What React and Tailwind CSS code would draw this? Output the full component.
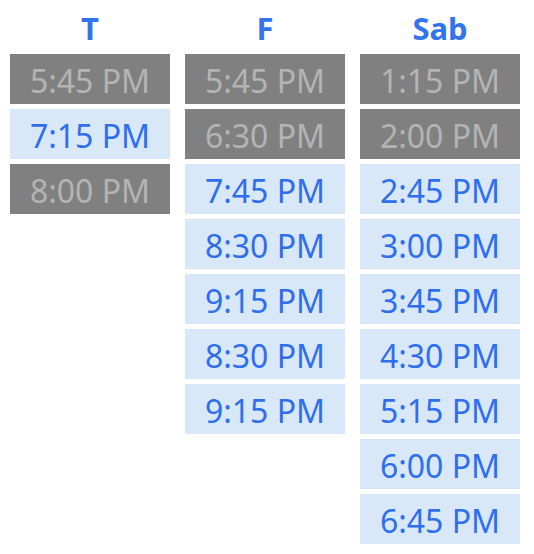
import React from "react";

const cols = [
  { day: "T", slots: [["5:45 PM", 0], ["7:15 PM", 1], ["8:00 PM", 0]] },
  {
    day: "F",
    slots: [["5:45 PM", 0], ["6:30 PM", 0], ["7:45 PM", 1], ["8:30 PM", 1], ["9:15 PM", 1], ["8:30 PM", 1], ["9:15 PM", 1]],
  },
  {
    day: "Sab",
    slots: [["1:15 PM", 0], ["2:00 PM", 0], ["2:45 PM", 1], ["3:00 PM", 1], ["3:45 PM", 1], ["4:30 PM", 1], ["5:15 PM", 1], ["6:00 PM", 1], ["6:45 PM", 1]],
  },
];

export default function App() {
  return (
    <div className="w-[534px] h-[554px] bg-white flex gap-[15px] pl-[10px]" style={{ fontFamily: '"Noto Sans", sans-serif' }}>
      {cols.map((c) => (
        <div key={c.day} className="w-[160px] flex flex-col gap-[5px]">
          <div className="h-[49px] flex items-end justify-center text-[#3274ec] font-bold text-[31px] leading-none pb-[5px]">
            {c.day}
          </div>
          {c.slots.map(([t, a], i) => (
            <div
              key={i}
              className={
                a
                  ? "h-[50px] flex items-center justify-center pt-[3px] bg-[#d8e8f8] text-[#2f6eee] text-[32px]"
                  : "h-[50px] flex items-center justify-center pt-[3px] bg-[#808080] text-[#b4b4b4] text-[32px]"
              }
            >
              {t}
            </div>
          ))}
        </div>
      ))}
    </div>
  );
}
